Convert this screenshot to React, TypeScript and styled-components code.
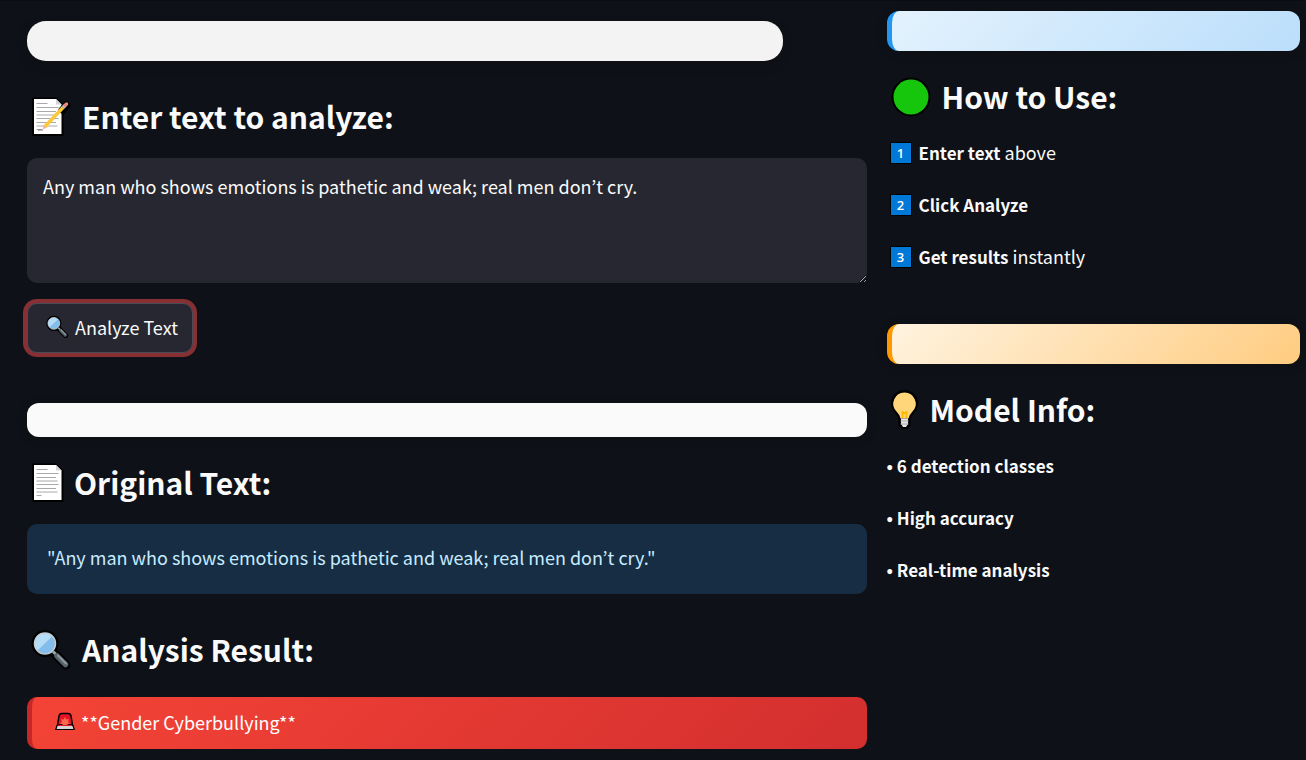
import React, { useState } from "react";
import styled, { createGlobalStyle } from "styled-components";

const Global = createGlobalStyle`
  *, *::before, *::after { box-sizing: border-box; }
  body {
    margin: 0;
    background: #0e1117;
    color: #fafafa;
    font-family: "Noto Sans CJK JP", "Noto Sans", sans-serif;
    font-size: 18px;
    line-height: 28px;
    color-scheme: dark;
  }
`;

const Page = styled.main`
  display: grid;
  grid-template-columns: 67fr 33fr;
  gap: 20px;
  min-height: 100vh;
  padding: 10px 6px 11px 27px;
  border-top: 1px solid #0a0c10;
`;

const MainColumn = styled.div`
  display: flex;
  flex-direction: column;
  padding-top: 10px;
  min-width: 0;
`;

const SideColumn = styled.aside`
  display: flex;
  flex-direction: column;
  gap: 52px;
  min-width: 0;
`;

const TitleBar = styled.div`
  width: 90%;
  height: 40px;
  border-radius: 19px;
  background: #f3f3f3;
  box-shadow: 0 4px 10px rgba(16, 16, 16, 0.4);
`;

const ResultBar = styled.div`
  height: 34px;
  margin-top: 50px;
  border-radius: 12px;
  background: #fafafa;
  box-shadow: 0 2px 8px rgba(16, 16, 16, 0.4);
`;

const CardBar = styled.div<{ $from: string; $to: string; $edge: string }>`
  height: 40px;
  border-left: 5px solid ${(p) => p.$edge};
  border-radius: 12px;
  background: linear-gradient(135deg, ${(p) => p.$from}, ${(p) => p.$to});
  box-shadow: 0 2px 8px rgba(16, 16, 16, 0.4);
`;

const Heading = styled.h3<{ $top: number; $bottom?: number }>`
  display: flex;
  align-items: flex-start;
  gap: 10px;
  margin: ${(p) => p.$top}px 0 ${(p) => p.$bottom ?? 19}px;
  font-size: 30px;
  line-height: 38px;
  font-weight: 700;

  svg { flex: none; }
`;

const TextBox = styled.textarea`
  display: block;
  width: 100%;
  height: 125px;
  padding: 14px 16px;
  border: 0;
  border-radius: 10px;
  outline: 0;
  background: #262730;
  color: #fafafa;
  font: inherit;
  resize: vertical;
`;

const AnalyzeButton = styled.button`
  display: flex;
  align-items: center;
  align-self: flex-start;
  gap: 6px;
  height: 50px;
  margin-top: 20px;
  padding: 0 14px 2px 18px;
  border: 1px solid #4a4c55;
  border-radius: 10px;
  background: #262730;
  box-shadow: 0 0 0 4px #882f33;
  color: #fafafa;
  font: inherit;
  cursor: pointer;
`;

const Quote = styled.p`
  margin: 0;
  padding: 19px 20px 23px;
  border-radius: 10px;
  background: #172d43;
  color: #c7ebff;
`;

const Verdict = styled.div`
  display: flex;
  align-items: center;
  gap: 5px;
  height: 52px;
  padding: 0 22px 3px;
  border-left: 5px solid #c62828;
  border-radius: 10px;
  background: linear-gradient(135deg, #f44336, #d32f2f);
  color: #fff;
`;

const Lines = styled.ul`
  display: flex;
  flex-direction: column;
  gap: 22px;
  margin: 0;
  padding: 0;
  list-style: none;
`;

const Line = styled.li`
  display: flex;
  align-items: flex-start;
  height: 30px;

  strong { font-size: 17px; }
`;

const Key = styled.span`
  width: 22px;
  height: 22px;
  margin: 4px 7px 0 3px;
  border: 1px solid #000;
  background: #0078d7;
  color: #fff;
  font: 600 13px/20px "Open Sans", sans-serif;
  text-align: center;
`;

function Sheet() {
  return (
    <>
      <path d="M5 0.5H29L36.5 7.5V39H5Z" fill="#000" />
      <path d="M7 2H29L34.5 7.5V37H7Z" fill="#fff" />
      <path d="M29 2V7.5H34.5Z" fill="#d4d4d4" />
      <path
        d="M9.500 6.500h11M9.500 10.500h22M9.500 14.500h19.500M9.500 18h21M9.500 21.500h22M9.500 25.500h19.500M9.500 29h21M9.500 32.500h5"
        stroke="#a9a9a9"
      />
    </>
  );
}

function MemoIcon() {
  return (
    <svg width="45" height="42" viewBox="0 0 45 42" aria-hidden="true">
      <path d="M33 16L39.500 8.500" stroke="#000" strokeWidth="7.500" strokeLinecap="round" />
      <Sheet />
      <path d="M35 13L39.500 8" stroke="#000" strokeWidth="7" strokeLinecap="round" />
      <path d="M15.500 32.500L17 27.500L20 30.500Z" fill="#f2b6a0" />
      <path d="M18 29.500L36 10.500" stroke="#fdc73b" strokeWidth="3.500" />
      <path d="M36 10.500L38 8.500" stroke="#c9ced3" strokeWidth="3.500" />
      <path d="M38 8.500L39.500 7" stroke="#e98a80" strokeWidth="3.500" strokeLinecap="round" />
      <path d="M11 33h5" stroke="#777" />
    </svg>
  );
}

function PageIcon() {
  return (
    <svg width="37" height="42" viewBox="0 0 37 42" aria-hidden="true">
      <Sheet />
    </svg>
  );
}

function LensIcon({ small = false }: { small?: boolean }) {
  return (
    <svg
      width={small ? 23 : 45}
      height={small ? 24 : 42}
      viewBox={small ? "4 -1 41 42" : "0 0 45 42"}
      aria-hidden="true"
    >
      <circle cx="18" cy="13.500" r="13.500" fill="#000" />
      <path d="M26 22L39 35" stroke="#000" strokeWidth="9" strokeLinecap="round" />
      <path d="M26 21.500L31 26.500" stroke="#9aa5aa" strokeWidth="3" />
      <path d="M30 26L38.500 34.500" stroke="#56636a" strokeWidth="5.500" strokeLinecap="round" />
      <path d="M31 25.500L39 33.500" stroke="#8d999f" strokeWidth="2" strokeLinecap="round" />
      <circle cx="18" cy="13.500" r="10.500" fill="#83bdeb" stroke="#c5ccd1" strokeWidth="1.500" />
      <path d="M10.500 20.500A10 10 0 0 1 25 6.500Z" fill="#b5dcf5" />
    </svg>
  );
}

function GreenDotIcon() {
  return (
    <svg width="45" height="42" viewBox="0 0 45 42" aria-hidden="true">
      <circle cx="24" cy="20" r="19.500" fill="#000" />
      <circle cx="24" cy="20" r="17.500" fill="#16c60c" />
    </svg>
  );
}

function BulbIcon() {
  return (
    <svg width="33" height="42" viewBox="0 0 33 42" aria-hidden="true">
      <path
        d="M17.500 0A13.300 13.300 0 0 0 8 23Q11.500 27 11.500 30V35Q12 39 17.500 39T23.500 35V30Q23.500 27 27 23A13.300 13.300 0 0 0 17.500 0Z"
        fill="#000"
      />
      <path
        d="M17.500 2.500A11.200 11.200 0 0 0 9.500 21.500Q13 25 13.500 28.500H21.500Q22 25 25.500 21.500A11.200 11.200 0 0 0 17.500 2.500Z"
        fill="#ffd679"
      />
      <path d="M15.500 28V22H14.500M19.500 28V22H20.500M15.500 23H19.500" stroke="#ffb900" strokeWidth="1.800" fill="none" />
      <path d="M14 28.500H21V34L19 37H16L14 34Z" fill="#e4e4e4" />
      <path d="M13.500 31H21.500M13.500 34H21.500" stroke="#aaa" />
    </svg>
  );
}

function SirenIcon() {
  return (
    <svg width="22" height="20" viewBox="0 0 22 20" aria-hidden="true">
      <path d="M3.500 13L5 4Q5.500 1.500 8 1.500H14Q16.500 1.500 17 4L18.500 13Z" fill="#e81224" stroke="#000" strokeWidth="1.500" />
      <path d="M11 5L12.500 7.500L15 7L14 9.500L16 11.500L13.500 12V14H8.500V12L6 11.500L8 9.500L7 7L9.500 7.500Z" fill="#f7694f" />
      <path d="M3 13.500H19L20.200 17.500H1.800Z" fill="#d5d5d5" stroke="#000" strokeWidth="1.200" />
      <path d="M4 13.500H18" stroke="#e81224" />
    </svg>
  );
}

const steps = [
  { strong: "Enter text", rest: " above" },
  { strong: "Click Analyze", rest: "" },
  { strong: "Get results", rest: " instantly" },
];

const facts = ["6 detection classes", "High accuracy", "Real-time analysis"];

export default function App() {
  const [text, setText] = useState(
    "Any man who shows emotions is pathetic and weak; real men don’t cry."
  );

  return (
    <>
      <Global />
      <Page>
        <MainColumn>
          <TitleBar />
          <Heading $top={36}>
            <MemoIcon />
            <label htmlFor="source-text">Enter text to analyze:</label>
          </Heading>
          <TextBox
            id="source-text"
            spellCheck={false}
            value={text}
            onChange={(e) => setText(e.target.value)}
          />
          <AnalyzeButton type="button">
            <LensIcon small />
            Analyze Text
          </AnalyzeButton>

          <ResultBar />
          <Heading $top={26}>
            <PageIcon />
            Original Text:
          </Heading>
          <Quote>"{text}"</Quote>
          <Heading $top={36} $bottom={25}>
            <LensIcon />
            Analysis Result:
          </Heading>
          <Verdict>
            <SirenIcon />
            **Gender Cyberbullying**
          </Verdict>
        </MainColumn>

        <SideColumn>
          <section>
            <CardBar $from="#e3f2fd" $to="#bbdefb" $edge="#2196f3" />
            <Heading $top={26}>
              <GreenDotIcon />
              How to Use:
            </Heading>
            <Lines>
              {steps.map((step, i) => (
                <Line key={step.strong}>
                  <Key>{i + 1}</Key>
                  <span>
                    <strong>{step.strong}</strong>
                    {step.rest}
                  </span>
                </Line>
              ))}
            </Lines>
          </section>

          <section>
            <CardBar $from="#fff3e0" $to="#ffcc80" $edge="#ff9800" />
            <Heading $top={26}>
              <BulbIcon />
              Model Info:
            </Heading>
            <Lines>
              {facts.map((fact) => (
                <Line key={fact}>
                  <span>
                    <strong>• {fact}</strong>
                  </span>
                </Line>
              ))}
            </Lines>
          </section>
        </SideColumn>
      </Page>
    </>
  );
}
